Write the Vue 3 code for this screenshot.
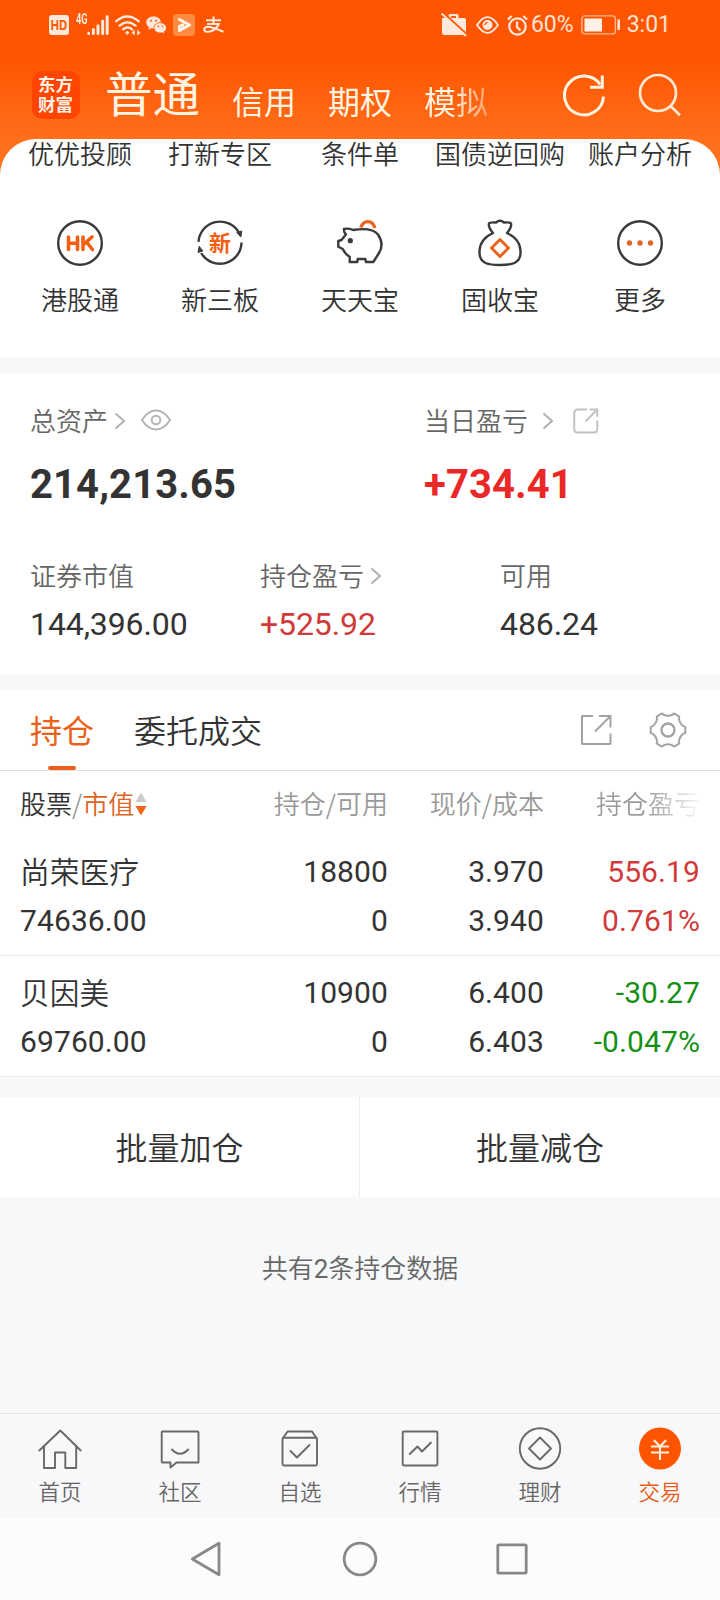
<script setup>
const shortcutLinks = ['优优投顾', '打新专区', '条件单', '国债逆回购', '账户分析']
const shortcuts = [
  { id: 'hk', label: '港股通' },
  { id: 'neeq', label: '新三板' },
  { id: 'pig', label: '天天宝' },
  { id: 'bag', label: '固收宝' },
  { id: 'more', label: '更多' },
]
const holdings = [
  { name: '尚荣医疗', value: '74636.00', qty: '18800', avail: '0', price: '3.970', cost: '3.940', pl: '556.19', rate: '0.761%', trend: 'up' },
  { name: '贝因美', value: '69760.00', qty: '10900', avail: '0', price: '6.400', cost: '6.403', pl: '-30.27', rate: '-0.047%', trend: 'down' },
]
const navItems = [
  { id: 'home', label: '首页' },
  { id: 'community', label: '社区' },
  { id: 'watch', label: '自选' },
  { id: 'market', label: '行情' },
  { id: 'wealth', label: '理财' },
  { id: 'trade', label: '交易' },
]

// Six-lobed gear outline around (20, 20)
const polar = (r, deg) => {
  const a = (deg * Math.PI) / 180
  return `${(20 + r * Math.cos(a)).toFixed(2)} ${(20 + r * Math.sin(a)).toFixed(2)}`
}
let gearPath = `M${polar(17.6, -10)}`
for (let k = 0; k < 6; k++) {
  const a = k * 60
  gearPath += `L${polar(17.6, a + 10)}Q${polar(15.2, a + 14)} ${polar(14.6, a + 22)}Q${polar(14, a + 30)} ${polar(14.6, a + 38)}Q${polar(15.2, a + 46)} ${polar(17.6, a + 50)}`
}
gearPath += 'Z'
</script>

<template>
  <div class="screen">
    <header class="top">
      <div class="status">
        <div class="status-left">
          <svg class="hd" width="20" height="20" viewBox="0 0 20 20">
            <rect width="20" height="20" rx="3" fill="#ffe9dc" />
            <path d="M3.2 5v10M8.3 5v10M3.2 10h5.1M11.6 5v10M11.6 5.8h1.8q3.2 0 3.2 3v2.4q0 3-3.2 3h-1.8" fill="none" stroke="#ff5a05" stroke-width="1.8" />
          </svg>
          <span class="net">4G</span>
          <svg class="signal" width="22" height="20" viewBox="0 0 22 20" stroke="#ffe9dc" stroke-width="3" stroke-linecap="round">
            <path d="M1.7 18.3v.2M6.4 14.5v4M11 10.8v7.7M15.7 6v12.5M20.2 1.5v17" />
          </svg>
          <svg class="wifi" width="26" height="21" viewBox="0 0 26 21" fill="none" stroke="#ffe9dc" stroke-width="2.4" stroke-linecap="round">
            <path d="M1.3 6.2Q12 -3.4 23.7 6.2M4.6 10.6q7.900-6.600 16 0M8.300 14.300q4.200-3.400 8.600 0" />
            <circle cx="12.200" cy="17.800" r="1.300" fill="#ffe9dc" stroke-width="1" />
            <path d="M19.500 15.500v4.500l-2.500-2.200zM22.500 15.500v4.500l2.500-2.200z" fill="#ffe9dc" stroke-width=".6" />
          </svg>
          <svg class="wechat" width="21" height="19" viewBox="0 0 21 19">
            <path d="M7.500.5C3.400.5.300 3 .300 6.400c0 1.900 1 3.500 2.700 4.600l-.7 2.700 2.900-1.500c.7.200 1.500.3 2.300.3 4.100 0 7.400-2.600 7.400-6S11.600.5 7.500.5z" fill="#ffe9dc" />
            <path d="M14.200 6.700c-3.500 0-6.200 2.300-6.200 5.100s2.700 5.200 6.200 5.200c.7 0 1.400-.1 2-.3l2.600 1.500-.7-2.300c1.500-1 2.300-2.400 2.300-4 0-2.900-2.700-5.200-6.200-5.200z" fill="#ffe9dc" stroke="#ff5a05" stroke-width=".8" />
            <g fill="#ff5a05"><circle cx="5" cy="4.700" r="1" /><circle cx="10" cy="4.700" r="1" /><circle cx="12.200" cy="10.400" r=".8" /><circle cx="16.400" cy="10.400" r=".8" /></g>
          </svg>
          <svg class="play" width="22" height="22" viewBox="0 0 22 22">
            <rect width="22" height="22" rx="4" fill="#ff8a42" />
            <path d="M6.500 5.500l10 5.500-10 5.500v-4l3.500-1.500" fill="none" stroke="#fff4e8" stroke-width="3" stroke-linejoin="round" stroke-linecap="round" />
          </svg>
          <svg class="zhi" width="21" height="18" viewBox="0 0 21 18" fill="none" stroke="#ffe9dc" stroke-width="2">
            <path d="M3 4.200h15M10.500 .5v7.500M4 8h11.800Q13 14.500 6 15.800 1 16 1.200 13.400 1.500 11 5 10.800 8 10.800 20.500 15.800" />
          </svg>
        </div>
        <div class="status-right">
          <svg class="case" width="26" height="24" viewBox="0 0 26 24">
            <path d="M1 5h6.500V2.500Q7.500 1 9 1h7q1.500 0 1.500 1.500V5H23q2 0 2 2v13q0 2-2 2H3q-2 0-2-2z" fill="#ffe9dc" />
            <path d="M10 5V3h5v2z" fill="#ff5a05" />
            <path d="M2.500 0L26 21.500" stroke="#ff5a05" stroke-width="2.200" />
            <path d="M.5.500L25 23" stroke="#ffe9dc" stroke-width="1.800" />
          </svg>
          <svg class="care" width="23" height="18" viewBox="0 0 22 17" fill="none" stroke="#ffe9dc" stroke-width="1.800">
            <path d="M1 8.500Q11-6.500 21 8.500 11 23.500 1 8.500z" /><circle cx="11" cy="8.500" r="4.700" fill="#ffe9dc" stroke="none" /><path d="M8.500 8.500q.3-2.200 2.500-2.500" stroke="#ff5a05" stroke-width="1.300" />
          </svg>
          <svg class="alarm" width="21" height="21" viewBox="0 0 21 21" fill="none" stroke="#ffe9dc" stroke-width="2.200">
            <circle cx="10.500" cy="11.500" r="8.200" /><path d="M10 6.500v5.500l3.500 3.500M.8 4.500L4.800 1M16.200 1l4 3.500" />
          </svg>
          <span class="stat-text pct">60%</span>
          <svg class="battery" width="40" height="20" viewBox="0 0 40 20">
            <rect x=".9" y=".9" width="33.500" height="18" rx="3" fill="none" stroke="#ffb890" stroke-width="1.400" /><rect x="3.500" y="3.500" width="17.500" height="13" fill="#fff0e8" /><path d="M37.700 4.500v10.500" stroke="#ffe9dc" stroke-width="2.500" />
          </svg>
          <span class="stat-text">3:01</span>
        </div>
      </div>
      <div class="title-bar">
        <div class="logo"><span>东方财富</span></div>
        <b class="mode active">普通</b>
        <span class="mode">信用</span>
        <span class="mode">期权</span>
        <span class="mode fade">模拟</span>
        <svg class="refresh" width="44" height="44" viewBox="0 0 44 44" fill="none" stroke="#fff3e2" stroke-width="3">
          <path d="M41.500 23.500A19.500 19.500 0 1 1 38.200 11.500" /><path d="M40.300 2.500V14.300H28" />
        </svg>
        <svg class="search" width="44" height="44" viewBox="0 0 44 44" fill="none" stroke="#ffe9d2" stroke-width="2.700">
          <circle cx="20" cy="20" r="18" /><path d="M32.500 33L42 42.200" />
        </svg>
      </div>
    </header>

    <section class="sheet">
      <div class="grid links"><span v-for="l in shortcutLinks" :key="l">{{ l }}</span></div>
      <div class="grid icons">
        <div v-for="s in shortcuts" :key="s.id" class="shortcut">
          <svg width="48" height="48" viewBox="0 0 48 48" fill="none" stroke="#3a3a3a" stroke-width="2.400" stroke-linejoin="round">
            <template v-if="s.id === 'hk'">
              <circle cx="24" cy="24" r="21.800" />
              <path d="M12.500 18v12.500M21.500 18v12.500M12.500 24.200h9M27 18v12.500M36 18l-8 7M30.500 23l6 7.500" stroke="#f65e14" stroke-width="3.600" stroke-linecap="round" />
            </template>
            <template v-else-if="s.id === 'neeq'">
              <path d="M2.500 22.800A21.600 21.600 0 0 1 42.800 13.500M45.500 23.500A21.600 21.600 0 0 1 5.200 34" />
              <path d="M45.800 12l-1 6-4-4.500zM2 33.500l1.200-6.200 3.600 4.700z" fill="#3a3a3a" stroke-width="1" />
              <text x="24" y="32" text-anchor="middle" class="neeq-text">新</text>
            </template>
            <template v-else-if="s.id === 'pig'">
              <path d="M8 10Q12 9 17.300 11 36 8 42 15.500 48.500 25 43 34L37.300 43H30L29.300 40H21.700L21.300 43H13.700V37.700Q9 35 6.700 30L2.300 27.700V22L5.500 21 10 15.300Q7.500 13 8 10Z" />
              <circle cx="14.300" cy="21.700" r="2.600" fill="#3a3a3a" stroke="none" />
              <path d="M24.700 8.500Q27 2.700 31.700 2.700 37 2.700 39 9" stroke="#ea6420" stroke-width="3.200" />
            </template>
            <template v-else-if="s.id === 'bag'">
              <path d="M17 14Q12 8 13 4.500Q13.500 3 20 3.500Q24 0 28 3.500Q34.500 3 35 4.500Q36 8 31 14Q44 20 44.500 32Q45 41 38.500 44Q34 46 24 46T9.500 44Q3 41 3.500 32Q4 20 17 14Z" />
              <path d="M24 20.500L32.500 29 24 37.500 15.500 29Z" stroke="#e8641e" stroke-width="3" />
            </template>
            <template v-else>
              <circle cx="24" cy="24" r="21.800" />
              <g fill="#e2622a" stroke="none"><circle cx="13.500" cy="24" r="2.700" /><circle cx="24" cy="24" r="2.700" /><circle cx="34.500" cy="24" r="2.700" /></g>
            </template>
          </svg>
          <span>{{ s.label }}</span>
        </div>
      </div>
    </section>

    <section class="assets">
      <div class="row2">
        <div>
          <div class="lbl">总资产<svg class="chev a" width="12" height="18" viewBox="0 0 12 18"><path d="M1.500 1.500L10 9l-8.500 7.500" /></svg>
            <svg class="eye" width="30" height="22" viewBox="0 0 30 22" fill="none" stroke="#b5b5b5" stroke-width="2"><path d="M1 11Q7 1.500 15 1.500T29 11Q23 20.500 15 20.500T1 11z" /><circle cx="15" cy="11" r="4.300" /></svg>
          </div>
          <div class="big">214,213.65</div>
        </div>
        <div>
          <div class="lbl">当日盈亏<svg class="chev b" width="12" height="18" viewBox="0 0 12 18"><path d="M1.500 1.500L10 9l-8.500 7.500" /></svg>
            <svg class="share" width="26" height="26" viewBox="0 0 26 26" fill="none" stroke="#c2c2c2" stroke-width="2"><path d="M14 1.500H5Q1.200 1.500 1.200 5.300V21Q1.200 24.500 5 24.500H20.500Q24.300 24.500 24.300 21V12.500M16.500 1.500H24.300V9M24 1.800L12.500 13.500" /></svg>
          </div>
          <div class="big red-strong">+734.41</div>
        </div>
      </div>
      <div class="row3">
        <div><div class="lbl">证券市值</div><div class="num">144,396.00</div></div>
        <div><div class="lbl">持仓盈亏<svg class="chev a" width="12" height="18" viewBox="0 0 12 18"><path d="M1.500 1.500L10 9l-8.500 7.500" /></svg></div><div class="num up">+525.92</div></div>
        <div><div class="lbl">可用</div><div class="num">486.24</div></div>
      </div>
    </section>

    <section class="positions">
      <div class="tabs">
        <span class="tab on">持仓</span>
        <span class="tab">委托成交</span>
        <svg class="export" width="32" height="32" viewBox="0 0 32 32" fill="none" stroke="#a3a3a3" stroke-width="2"><path d="M13 2H2.500Q2 2 2 2.500V29.500Q2 30 2.500 30H30Q30.500 30 30.500 29.500V19.500M19 2H30.500V13.500M30.300 2.200L15 17.500" /></svg>
        <svg class="gear" width="40" height="40" viewBox="0 0 40 40" fill="none" stroke="#a3a3a3" stroke-width="2" stroke-linejoin="round"><path :d="gearPath" /><circle cx="20" cy="20" r="6.500" stroke-width="2.300" /></svg>
      </div>
      <div class="cols thead">
        <span class="first"><span class="dark">股票</span>/<span class="orange">市值</span><svg width="12" height="24" viewBox="0 0 12 24"><path d="M6 .500L11.500 10H.5z" fill="#cbcbcb" /><path d="M.5 14h11L6 23.500z" fill="#f0641c" /></svg></span>
        <span>持仓/可用</span><span>现价/成本</span><span class="clip">持仓盈亏</span>
      </div>
      <div v-for="h in holdings" :key="h.name" class="holding">
        <div class="cols"><span class="cjk">{{ h.name }}</span><span>{{ h.qty }}</span><span>{{ h.price }}</span><span :class="h.trend">{{ h.pl }}</span></div>
        <div class="cols"><span>{{ h.value }}</span><span>{{ h.avail }}</span><span>{{ h.cost }}</span><span :class="h.trend">{{ h.rate }}</span></div>
      </div>
    </section>

    <div class="batch"><span>批量加仓</span><span>批量减仓</span></div>
    <div class="summary">共有<i>2</i>条持仓数据</div>

    <nav class="bottom">
      <div v-for="n in navItems" :key="n.id" class="item" :class="{ current: n.id === 'trade' }">
        <svg width="44" height="44" viewBox="0 0 44 44" fill="none" stroke="#686868" stroke-width="1.900" stroke-linejoin="round">
          <path v-if="n.id === 'home'" d="M.8 24L22.300 3.500 43.200 24M6 19.500V41H17V25.500H27.300V41H38.200V19.500" />
          <template v-else-if="n.id === 'community'">
            <path d="M4.500 4.500H39.500Q40.500 4.500 40.500 5.500V35.500H18.500L12.500 40.500V35.500H4.500Q3.700 35.500 3.700 34.500V5.500Q3.700 4.500 4.500 4.500Z" /><path d="M13.500 22Q22 31.500 30.700 22" />
          </template>
          <template v-else-if="n.id === 'watch'">
            <rect x="4.500" y="10.700" width="34.500" height="27.800" rx="1.500" /><path d="M4.700 11.500L9.500 4.500H34L38.800 11.500M12 23.500L19 30.500 32 17.500" />
          </template>
          <template v-else-if="n.id === 'market'">
            <rect x="4.700" y="4.500" width="34.700" height="34" rx="1.200" /><path d="M11.200 27.500L19.500 19.500 24 24.500 33.500 15" />
          </template>
          <template v-else-if="n.id === 'wealth'">
            <circle cx="22" cy="21.500" r="20.200" /><path d="M22 10.500L33 21.500 22 32.500 11 21.500Z" />
          </template>
          <template v-else>
            <circle cx="22" cy="21.500" r="21" fill="#ff5500" stroke="none" /><path d="M15.800 13L22 19.500 28.200 13M13 19.500H31M13 25.500H31M22 19.500V33" stroke="#ffeede" stroke-width="2.100" />
          </template>
        </svg>
        <span>{{ n.label }}</span>
      </div>
    </nav>
    <div class="system">
      <svg class="back" width="34" height="38" viewBox="0 0 34 38"><path d="M30 3.300V34.700L3.300 19Z" /></svg>
      <svg class="homebtn" width="36" height="36" viewBox="0 0 36 36"><circle cx="18" cy="18" r="15.800" /></svg>
      <svg width="32" height="32" viewBox="0 0 32 32"><rect x="1.800" y="1.800" width="28.400" height="28.400" rx="1" /></svg>
    </div>
  </div>
</template>

<style>
body { margin: 0; background: #f7f8fa; }
</style>

<style scoped>
.screen { width: 720px; height: 1600px; overflow: hidden; display: flex; flex-direction: column; background: #f7f8fa; color: #333; font-family: "Noto Sans CJK SC", sans-serif; font-weight: 350; }
.screen * { box-sizing: border-box; }
svg { display: block; flex: none; }
.top { height: 176px; flex: none; background: linear-gradient(#ff5500 0, #ff5500 58px, #ff6f1c 140px, #ff6f1c); }
.status { height: 50px; display: flex; justify-content: space-between; padding: 0 49px 0 49px; }
.status-left, .status-right { display: flex; align-items: center; }
.net { font: 700 14px/14px Roboto, sans-serif; color: #ffe9dc; width: 11px; margin: -13px 0 0 7px; transform: scaleX(.66); transform-origin: left; }
.wifi { margin-left: 6px; }
.wechat { margin-left: 5px; }
.play { margin-left: 6px; }
.zhi { margin-left: 8px; }
.stat-text { font: 400 23px/50px Roboto, sans-serif; color: #ffe3d2; }
.pct { font-size: 23px; margin-left: 3px; }
.care { margin-left: 9px; }
.alarm { margin-left: 8px; }
.battery { margin: 0 6px 0 7px; }
.title-bar { height: 89px; display: flex; align-items: center; padding-left: 32px; color: #fff3e2; }
.logo { width: 48px; height: 48px; margin-right: 25px; border-radius: 10px; background: #ff4500; display: flex; justify-content: center; align-items: center; font-weight: 700; font-size: 17.500px; line-height: 20px; padding-bottom: 2px; color: #fff0e6; }
.logo span { width: 36px; }
.mode { font-size: 32px; line-height: 40px; font-weight: 400; margin: 10px 32px 0 0; }
.mode.active { font-size: 47.500px; line-height: 60px; font-weight: 400; margin: -5px 32px 0 0; }
.mode.fade { margin-right: 0; background: linear-gradient(90deg, #fff3e2 45%, #ff9c60 100%); background-clip: text; -webkit-background-clip: text; color: transparent; }
.refresh { margin: 0 0 0 74px; }
.search { margin: 0 0 0 32px; }
.sheet { margin-top: -37px; height: 218px; flex: none; border-radius: 36px 36px 0 0; background: #fff; }
.grid { display: grid; grid-template-columns: repeat(5, 140px); padding: 0 10px; font-size: 26px; text-align: center; white-space: nowrap; }
.links { line-height: 28px; height: 30px; }
.links span { display: flex; justify-content: center; }
.icons { padding-top: 50px; }
.shortcut { display: flex; flex-direction: column; align-items: center; line-height: 30px; }
.shortcut span { margin-top: 17px; }
.neeq-text { font: 700 22px "Noto Sans CJK SC", sans-serif; fill: #f65e14; stroke: none; }
.assets { margin-top: 16px; height: 301px; flex: none; background: #fff; padding: 31px 30px 0; }
.row2 { display: grid; grid-template-columns: 394px 1fr; }
.row3 { display: grid; grid-template-columns: 230px 240px 1fr; margin-top: 49px; }
.lbl { display: flex; align-items: center; font-size: 26px; line-height: 32px; height: 32px; color: #666; }
.chev { fill: none; stroke: #b0b0b0; stroke-width: 2; }
.chev.a { margin: 2px 0 0 6px; }
.chev.b { margin: 1px 0 0 14px; }
.eye { margin-left: 15px; }
.share { margin-left: 19px; margin-top: 1px; }
.big { font: 700 40px/50px Roboto, sans-serif; margin-top: 24px; letter-spacing: .1px; }
.num { font: 400 32px/40px Roboto, sans-serif; margin-top: 13px; letter-spacing: -.1px; }
.red-strong { color: #ea2828; }
.up { color: #d13a3a; }
.down { color: #159015; }
.positions { margin-top: 16px; flex: none; background: #fff; }
.tabs { height: 81px; border-bottom: 1px solid #dedede; display: flex; align-items: center; padding: 0 32px 0 30px; font-size: 32px; }
.tab { height: 80px; line-height: 78px; margin-right: 40px; }
.tab.on { color: #ea6018; position: relative; font-weight: 400; }
.tab.on::after { content: ""; position: absolute; left: 18px; bottom: 0; width: 28px; height: 4px; border-radius: 2px; background: #ee5e18; }
.export { margin-left: auto; }
.gear { margin: 0 0 0 36px; }
.cols { display: grid; grid-template-columns: 1fr 120px 156px 156px; padding: 0 20px; text-align: right; font: 400 30px/49px Roboto, sans-serif; letter-spacing: .1px; height: 49px; white-space: nowrap; }
.cols > :first-child { text-align: left; }
.cols .cjk { font: 350 29.700px/47px "Noto Sans CJK SC", sans-serif; }
.thead { font: 350 26px/64px "Noto Sans CJK SC", sans-serif; height: 76px; color: #999; letter-spacing: 0; }
.first { display: flex; align-items: center; height: 64px; }
.first svg { margin: 1px 0 0 1px; }
.dark { color: #333; }
.orange { color: #dd6422; }
.clip { background: linear-gradient(90deg, #999 65%, #fff 102%); background-clip: text; -webkit-background-clip: text; color: transparent; }
.holding { height: 121px; padding-top: 12px; border-bottom: 1px solid #ebebeb; }
.thead + .holding { height: 109px; padding-top: 0; }
.batch { margin-top: 20px; height: 100px; flex: none; display: grid; grid-template-columns: 1fr 1fr; background: #fff; text-align: center; font-size: 32px; line-height: 99px; }
.batch span:first-child { border-right: 1px solid #ececec; }
.summary { margin-top: 50px; text-align: center; font-size: 26px; line-height: 39px; color: #666; }
.summary i { font: 400 26px/30px Roboto, sans-serif; }
.bottom { margin-top: auto; height: 105px; flex: none; background: #f8f8fa; border-top: 1px solid #e2e2e4; display: grid; grid-template-columns: repeat(6, 120px); }
.item { display: flex; flex-direction: column; align-items: center; padding-top: 13px; font-size: 21.500px; line-height: 28px; color: #666; }
.item span { margin-top: 6px; }
.current { color: #e2601c; }
.system { height: 82px; flex: none; background: #fcfcfc; display: flex; align-items: center; padding-left: 189px; }
.system svg { fill: none; stroke: #888; stroke-width: 2.800; stroke-linejoin: round; }
.homebtn { margin: 0 118px 0 119px; }
</style>
